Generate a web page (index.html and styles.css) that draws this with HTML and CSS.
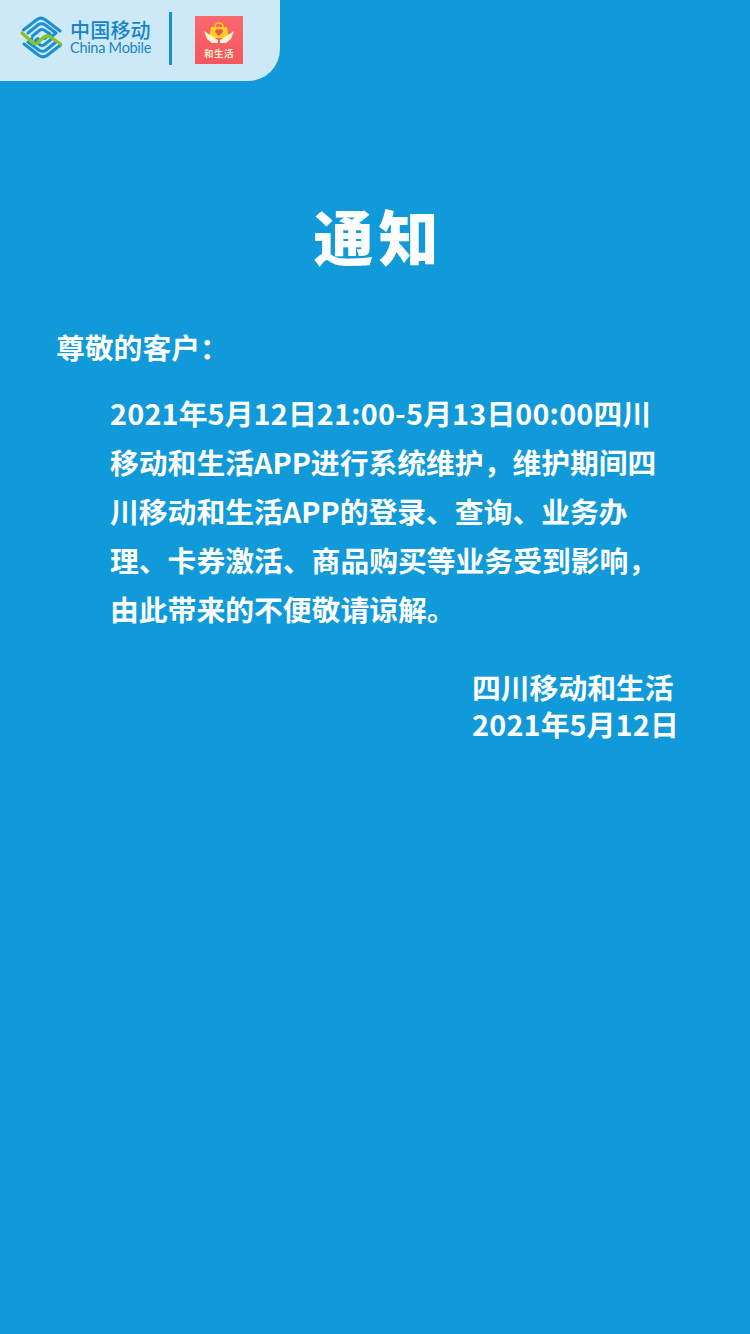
FILE: index.html
```html
<!DOCTYPE html>
<html lang="zh-CN">
<head>
<meta charset="utf-8">
<title>通知</title>
<link rel="stylesheet" href="styles.css">
</head>
<body>
<header class="brand">
  <svg class="cm-logo" viewBox="0 0 44 44" aria-hidden="true">
    <g fill="none" stroke="#1b8fd3" stroke-width="3" stroke-linecap="round" stroke-linejoin="round">
      <path d="M3.500 14 L17 3.500 Q21 .8 25 3.500 L40 15"/>
      <path d="M8 17 L18.500 8.500 Q21.500 6.800 24.500 8.500 L36 17 L31 21"/>
      <path d="M12.500 20 L20 14 Q22 13 24 14 L30 18 L24.500 22.500"/>
      <path d="M40.500 29 L27 39.500 Q23 42.200 19 39.500 L4 28"/>
      <path d="M36 26 L25.500 34.500 Q22.500 36.200 19.500 34.500 L8 26 L12 22.500"/>
      <path d="M31.500 23 L24 29 Q22 30 20 29 L15 25 L18 22.500"/>
    </g>
    <path fill="none" stroke="#8cc21f" stroke-width="3.200" stroke-linecap="round" stroke-linejoin="round" d="M2 17 L12 26 Q15 29 18 26.500 L24 21 Q27 19 30 20.500 L40.500 28"/>
  </svg>
  <div class="cm-name">
    <span class="cm-zh">中国移动</span>
    <span class="cm-en">China Mobile</span>
  </div>
  <span class="divider"></span>
  <div class="app-logo">
    <svg class="app-icon" viewBox="0 0 32 22" aria-hidden="true">
      <path fill="#ffd21f" d="M8 5h16l2 11H6z"/>
      <path fill="none" stroke="#ffd21f" stroke-width="1.600" d="M12 6V4a4 3 0 0 1 8 0v2"/>
      <path fill="#f4505a" d="M16 14l-3.500-3.500a2 2 0 0 1 3.500-2.500 2 2 0 0 1 3.500 2.500z"/>
      <path fill="#fff3d0" d="M1 9l6 4 8 5v3H9l-5-4zM31 9l-6 4-8 5v3h6l5-4z"/>
    </svg>
    <span class="app-name">和生活</span>
  </div>
</header>
<main class="notice">
  <h1 class="title">通知</h1>
  <p class="greeting">尊敬的客户：</p>
  <p class="body-text"><span class="num">2021</span>年<span class="num">5</span>月<span class="num">12</span>日<span class="num">21:00-5</span>月<span class="num">13</span>日<span class="num">00:00</span>四川<br>移动和生活APP进行系统维护，维护期间四<br>川移动和生活APP的登录、查询、业务办<br>理、卡券激活、商品购买等业务受到影响，<br>由此带来的不便敬请谅解。</p>
  <div class="signature">
    <p class="sign-line">四川移动和生活</p>
    <p class="sign-line"><span class="num">2021</span>年<span class="num">5</span>月<span class="num">12</span>日</p>
  </div>
</main>
</body>
</html>
```
FILE: styles.css
```css
* { box-sizing: border-box; }
html, body { margin: 0; padding: 0; }
body {
  width: 750px;
  height: 1334px;
  overflow: hidden;
  background: #109ada;
  color: #fff;
  font-family: "Noto Sans CJK SC", "Noto Sans", sans-serif;
  font-kerning: none;
}
.brand {
  width: 280px;
  height: 81px;
  display: flex;
  align-items: center;
  padding: 0 0 4px 20px;
  background: #cde8f7;
  border-bottom-right-radius: 32px;
}
.cm-logo { width: 44px; height: 44px; flex: none; margin-top: -2px; }
.cm-name {
  display: flex;
  flex-direction: column;
  margin: -3px 0 0 6px;
  color: #1486c9;
  width: 81px;
}
.cm-zh { font-size: 20px; line-height: 21px; font-weight: 500; letter-spacing: 0.2px; white-space: nowrap; }
.cm-en { font-family: "Lato", sans-serif; font-size: 14.500px; line-height: 15px; letter-spacing: -0.3px; white-space: nowrap; }
.divider { width: 3px; height: 53px; margin-left: 18px; background: #1192d6; flex: none; }
.app-logo {
  width: 48px;
  height: 48px;
  margin: 2px 0 0 23px;
  display: flex;
  flex-direction: column;
  align-items: center;
  background: linear-gradient(#f9696e, #f6555f);
  flex: none;
}
.app-icon { width: 32px; height: 22px; margin-top: 6px; flex: none; }
.app-name { font-size: 9.500px; line-height: 12px; font-weight: 700; color: #fff3d0; letter-spacing: 0.5px; margin-top: 3px; white-space: nowrap; }
.notice { padding: 0 57px; }
.title {
  margin: 110px 0 0;
  text-align: center;
  font-size: 60px;
  line-height: 88px;
  font-weight: 900;
  letter-spacing: 5px;
  text-indent: 7px;
}
.greeting { margin: 43px 0 0 -1px; font-size: 28.800px; line-height: 49px; font-weight: 700; }
.body-text { margin: 17px 0 0 53px; font-size: 28.800px; line-height: 49px; font-weight: 700; white-space: nowrap; }
.num { letter-spacing: 0.2px; }
.signature { margin: 35px 0 0 415px; }
.sign-line { margin: 0; font-size: 28.800px; line-height: 37px; font-weight: 700; white-space: nowrap; }
```
